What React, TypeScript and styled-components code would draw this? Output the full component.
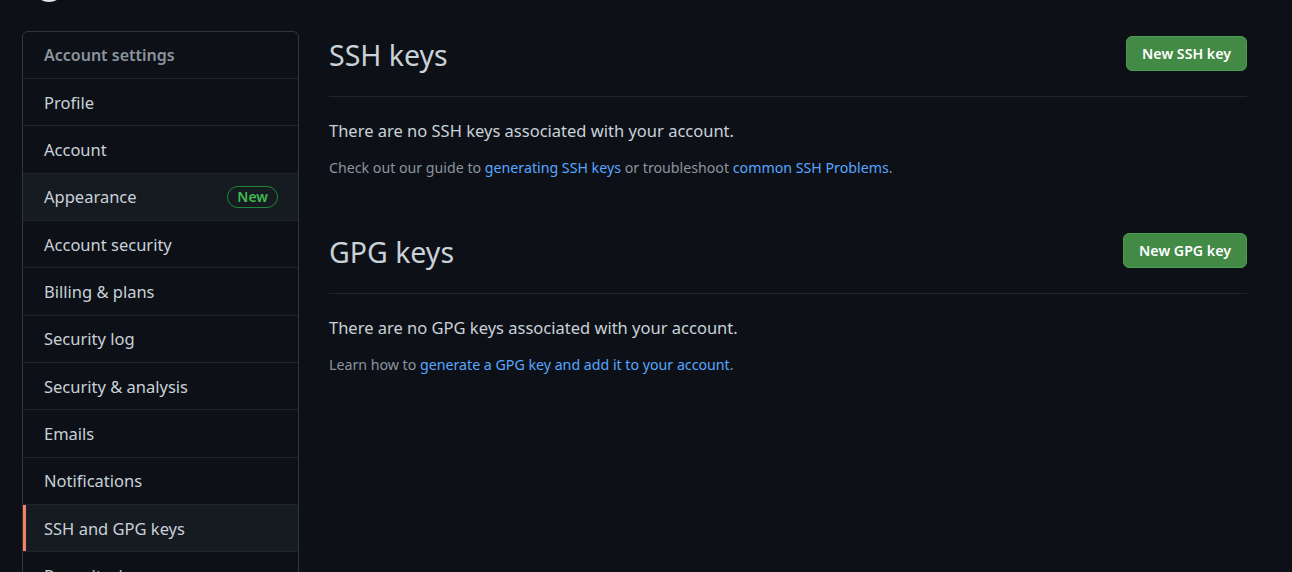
import { createGlobalStyle } from 'styled-components';
import styled from 'styled-components';

const GlobalStyle = createGlobalStyle`
  html, body {
    margin: 0;
    padding: 0;
    background: #0d1117;
    color: #c9d1d9;
    font-family: 'Noto Sans', 'Open Sans', 'Liberation Sans', sans-serif;
    overflow: hidden;
  }
`;

const menuItems = [
  'Profile',
  'Account',
  'Appearance',
  'Account security',
  'Billing & plans',
  'Security log',
  'Security & analysis',
  'Emails',
  'Notifications',
  'SSH and GPG keys',
  'Repositories',
];

const App = () => {
  return (
    <>
      <GlobalStyle />
      <Page>
        <AvatarPeek />
        <Layout>
          <Sidebar>
            <SidebarHeader>Account settings</SidebarHeader>
            {menuItems.map((item) => (
              <MenuItem
                key={item}
                $selected={item === 'SSH and GPG keys'}
                $highlighted={item === 'Appearance'}
              >
                <span>{item}</span>
                {item === 'Appearance' && <NewBadge>New</NewBadge>}
              </MenuItem>
            ))}
          </Sidebar>
          <Main>
            <Section>
              <Subhead>
                <Heading>SSH keys</Heading>
                <GreenButton>New SSH key</GreenButton>
              </Subhead>
              <Blankslate>There are no SSH keys associated with your account.</Blankslate>
              <Note>
                Check out our guide to <Link>generating SSH keys</Link> or troubleshoot{' '}
                <Link>common SSH Problems</Link>.
              </Note>
            </Section>
            <Section>
              <Subhead>
                <Heading>GPG keys</Heading>
                <GreenButton>New GPG key</GreenButton>
              </Subhead>
              <Blankslate>There are no GPG keys associated with your account.</Blankslate>
              <Note>
                Learn how to <Link>generate a GPG key and add it to your account</Link>.
              </Note>
            </Section>
          </Main>
        </Layout>
      </Page>
    </>
  );
};

export default App;

const Page = styled.div`
  width: 1292px;
  height: 572px;
  overflow: hidden;
  position: relative;
`;

const AvatarPeek = styled.div`
  position: absolute;
  left: 33px;
  top: -30px;
  width: 32px;
  height: 32px;
  border-radius: 50%;
  background: #e6e6e6;
`;

const Layout = styled.div`
  display: flex;
  align-items: flex-start;
  gap: 30px;
  padding: 31px 45px 0 22px;
`;

const Sidebar = styled.nav`
  width: 275px;
  flex-shrink: 0;
  border: 1px solid #30363d;
  border-radius: 6px;
  overflow: hidden;
`;

const SidebarHeader = styled.div`
  height: 46px;
  display: flex;
  align-items: center;
  padding: 0 21px;
  font-size: 16px;
  font-weight: 600;
  color: #8b949e;
  border-bottom: 1px solid #21262d;
`;

const MenuItem = styled.div<{ $selected?: boolean; $highlighted?: boolean }>`
  height: 46.33px;
  display: flex;
  align-items: center;
  justify-content: space-between;
  padding: 0 20px 0 21px;
  font-size: 16.5px;
  color: #c9d1d9;
  border-bottom: 1px solid #21262d;
  background: ${(p) => (p.$selected || p.$highlighted ? '#161b22' : 'transparent')};
  box-shadow: ${(p) => (p.$selected ? 'inset 3px 0 0 #f78166' : 'none')};
`;

const NewBadge = styled.span`
  display: inline-flex;
  align-items: center;
  height: 20px;
  padding: 0 9px;
  border: 1px solid #238636;
  border-radius: 12px;
  color: #3fb950;
  font-size: 14px;
  font-weight: 600;
`;

const Main = styled.main`
  flex: 1;
  padding-top: 6px;
  display: flex;
  flex-direction: column;
  gap: 56px;
`;

const Section = styled.section`
  display: flex;
  flex-direction: column;
`;

const Subhead = styled.div`
  display: flex;
  align-items: center;
  justify-content: space-between;
  padding-bottom: 23px;
  border-bottom: 1px solid #21262d;
  margin-bottom: 22px;
`;

const Heading = styled.h2`
  margin: 0;
  font-size: 28.5px;
  line-height: 36px;
  font-weight: 400;
  color: #c9d1d9;
`;

const GreenButton = styled.button`
  height: 35px;
  padding: 0 15px;
  border: 1px solid #4a9c4e;
  border-radius: 6px;
  background: #428a45;
  color: #ffffff;
  font-family: inherit;
  font-size: 14.2px;
  font-weight: 600;
  margin-top: -3px;
`;

const Blankslate = styled.p`
  margin: 0 0 14px;
  font-size: 16.5px;
  line-height: 24px;
  color: #c9d1d9;
`;

const Note = styled.p`
  margin: 0;
  font-size: 14.2px;
  line-height: 21px;
  color: #8b949e;
`;

const Link = styled.a`
  color: #58a6ff;
  text-decoration: none;
  cursor: pointer;
`;
